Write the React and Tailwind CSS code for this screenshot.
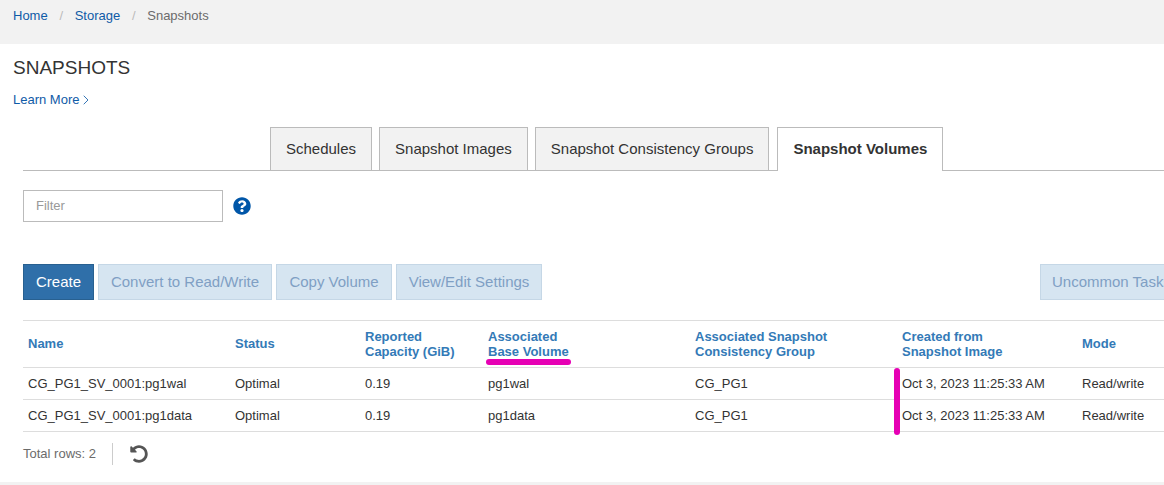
import { ChevronRight } from "lucide-react";
import { FaQuestionCircle, FaUndoAlt } from "react-icons/fa";

const tabs = ["Schedules", "Snapshot Images", "Snapshot Consistency Groups"];

const actions = [
  { label: "Convert to Read/Write", width: "w-[174px]" },
  { label: "Copy Volume", width: "w-[116px]" },
  { label: "View/Edit Settings", width: "w-[146px]" },
];

const rows = [
  { name: "CG_PG1_SV_0001:pg1wal", base: "pg1wal" },
  { name: "CG_PG1_SV_0001:pg1data", base: "pg1data" },
];

const cols = "grid grid-cols-[212px_130px_123px_207px_207px_180px_100px]";

const App = () => {
  return (
    <div className="w-[1164px] h-[485px] overflow-hidden bg-white font-['Liberation_Sans',Arial,sans-serif] text-[#333]">
      {/* Breadcrumb */}
      <div className="h-[44px] bg-[#f2f2f2] pl-[13px] pt-[8px] text-[13px] leading-[16px] flex">
        <a className="text-[#0f5ba7]">Home</a>
        <span className="text-[#bbb] w-[27px] text-center">/</span>
        <a className="text-[#0f5ba7]">Storage</a>
        <span className="text-[#bbb] w-[27px] text-center">/</span>
        <span className="text-[#6b6b6b]">Snapshots</span>
      </div>

      {/* Title */}
      <h1 className="mt-[13px] ml-[13px] text-[19px] leading-[21px] font-normal">SNAPSHOTS</h1>
      <a className="mt-[14px] ml-[13px] flex items-center text-[13px] leading-[16px] text-[#0f5ba7]">
        Learn More
        <ChevronRight size={16} strokeWidth={1.25} className="-ml-[1px]" />
      </a>

      {/* Tabs */}
      <div className="mt-[19px] ml-[23px] h-[44px] border-b border-[#bbb] flex pl-[247px] gap-[7px]">
        {tabs.map((t) => (
          <div
            key={t}
            className="h-[44px] px-[15px] border border-[#bbb] bg-[#f2f2f2] text-[15px] flex items-center"
          >
            {t}
          </div>
        ))}
        <div className="ml-[1px] h-[44px] px-[15px] border border-b-0 border-[#bbb] bg-white text-[15px] font-bold flex items-center">
          Snapshot Volumes
        </div>
      </div>

      {/* Filter */}
      <div className="mt-[19px] ml-[23px] flex items-center">
        <div className="w-[200px] h-[32px] border border-[#bbb] pl-[12px] flex items-center text-[13px] text-[#999]">
          Filter
        </div>
        <FaQuestionCircle size={18} className="ml-[10px] text-[#0056a8]" />
      </div>

      {/* Actions */}
      <div className="mt-[42px] ml-[23px] flex gap-[4px]">
        <button className="shrink-0 w-[71px] h-[36px] bg-[#2f6fa9] border border-[#286090] text-white text-[15px]">
          Create
        </button>
        {actions.map((a) => (
          <button
            key={a.label}
            className={`${a.width} shrink-0 h-[36px] bg-[#d6e5f1] border border-[#c5d7e6] text-[#7f9fc4] text-[15px]`}
          >
            {a.label}
          </button>
        ))}
        <button className="ml-[494px] shrink-0 w-[140px] h-[36px] bg-[#d6e5f1] border border-[#c5d7e6] text-[#7f9fc4] text-[15px] text-left pl-[11px]">
          Uncommon Tasks
        </button>
      </div>

      {/* Table */}
      <div className="relative mt-[20px] ml-[23px] w-[1141px] text-[13px]">
        <div className={`${cols} h-[48px] border-y border-[#ddd] items-center font-bold text-[#337ab7] leading-[15px]`}>
          <div className="pl-[5px] pb-[1px]">Name</div>
          <div className="pb-[1px]">Status</div>
          <div>Reported<br />Capacity (GiB)</div>
          <div className="relative">
            Associated<br />Base Volume
            <span className="absolute left-[-2px] top-[30px] w-[85px] h-[6px] rounded-full bg-[#e600b4]" />
          </div>
          <div>Associated Snapshot<br />Consistency Group</div>
          <div>Created from<br />Snapshot Image</div>
          <div className="pb-[1px]">Mode</div>
        </div>
        {rows.map((r) => (
          <div key={r.name} className={`${cols} h-[32px] border-b border-[#ddd] items-center`}>
            <div className="pl-[5px]">{r.name}</div>
            <div>Optimal</div>
            <div>0.19</div>
            <div>{r.base}</div>
            <div>CG_PG1</div>
            <div className="whitespace-nowrap">Oct 3, 2023 11:25:33 AM</div>
            <div>Read/write</div>
          </div>
        ))}
        <span className="absolute left-[871px] top-[48px] w-[6px] h-[67px] rounded-full bg-[#e600b4]" />
      </div>

      {/* Footer */}
      <div className="mt-[11px] ml-[23px] flex items-center h-[22px] text-[13px] text-[#6b6b6b]">
        Total rows: 2
        <span className="ml-[16px] h-[22px] w-px bg-[#ccc]" />
        <FaUndoAlt size={18} className="ml-[17px] text-[#555]" />
      </div>
      <div className="mt-[17px] h-[4px] bg-[#f2f2f2]" />
    </div>
  );
};

export default App;
